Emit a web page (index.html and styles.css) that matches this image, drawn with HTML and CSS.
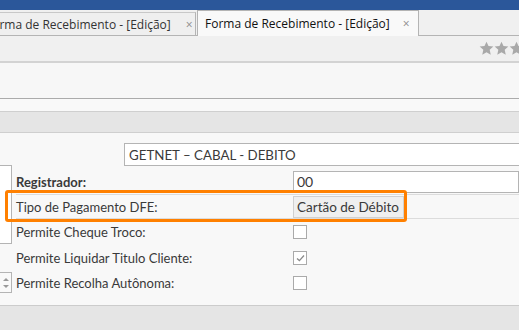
FILE: index.html
```html
<!DOCTYPE html>
<html lang="pt">
<head>
<meta charset="utf-8">
<title>Forma de Recebimento</title>
<link rel="stylesheet" href="styles.css">
</head>
<body>
<div class="app">
  <div class="titlebar"></div>
  <div class="tabstrip">
    <div class="tab tab-inactive"><span class="tab-label">Forma de Recebimento - [Edição]</span><span class="tab-close">×</span></div>
    <div class="tab tab-active"><span class="tab-label">Forma de Recebimento - [Edição]</span><span class="tab-close">×</span></div>
  </div>
  <div class="toolbar">
    <div class="toolbar-sep"></div>
    <div class="stars">
      <svg class="star" width="15" height="15" viewBox="0 0 24 24"><path d="M12 1 L15.2 8 L23 8.8 L17.1 14 L18.8 22 L12 18 L5.2 22 L6.9 14 L1 8.8 L8.8 8 Z" fill="#a9a9a9"/></svg>
      <svg class="star" width="15" height="15" viewBox="0 0 24 24"><path d="M12 1 L15.2 8 L23 8.8 L17.1 14 L18.8 22 L12 18 L5.2 22 L6.9 14 L1 8.8 L8.8 8 Z" fill="#a9a9a9"/></svg>
      <svg class="star" width="15" height="15" viewBox="0 0 24 24"><path d="M12 1 L15.2 8 L23 8.8 L17.1 14 L18.8 22 L12 18 L5.2 22 L6.9 14 L1 8.8 L8.8 8 Z" fill="#a9a9a9"/></svg>
    </div>
  </div>
  <div class="divider"></div>
  <div class="header"></div>
  <div class="subheader"></div>
  <div class="band"></div>
  <div class="form">
    <div class="gutter">
      <div class="side-box"></div>
      <div class="spinner"><span class="spin-up"></span><span class="spin-down"></span></div>
    </div>
    <div class="fields">
      <div class="row row-desc">
        <div class="input input-desc">GETNET – CABAL - DEBITO</div>
      </div>
      <div class="row row-reg">
        <div class="label label-bold">Registrador:</div>
        <div class="value"><div class="input input-reg">00</div></div>
      </div>
      <div class="row row-lined">
        <div class="label">Tipo de Pagamento DFE:</div>
        <div class="value"><div class="select">Cartão de Débito</div></div>
      </div>
      <div class="row">
        <div class="label">Permite Cheque Troco:</div>
        <div class="value"><span class="check"></span></div>
      </div>
      <div class="row row-short">
        <div class="label">Permite Liquidar Titulo Cliente:</div>
        <div class="value"><span class="check"><svg width="9" height="8" viewBox="0 0 9 8"><path d="M1 4.5 L3.4 6.6 L8 1.5" fill="none" stroke="#8a8a8a" stroke-width="1.3"/></svg></span></div>
      </div>
      <div class="row">
        <div class="label">Permite Recolha Autônoma:</div>
        <div class="value"><span class="check"></span></div>
      </div>
    </div>
    <div class="highlight"></div>
  </div>
  <div class="footer"></div>
</div>
</body>
</html>
```
FILE: styles.css
```css
* { box-sizing: border-box; }
html, body { margin: 0; padding: 0; }
body {
  width: 519px;
  height: 330px;
  overflow: hidden;
  font-family: Lato, "Open Sans", sans-serif;
  color: #3a3a3a;
  background: #f8f8f8;
}
.app { width: 519px; height: 330px; overflow: hidden; display: flex; flex-direction: column; }
.titlebar { height: 10px; background: #2b579a; flex: none; }
.tabstrip {
  height: 26px;
  flex: none;
  display: flex;
  align-items: flex-end;
  background: #f0f0f0;
  border-bottom: 1px solid #b4b4b4;
}
.tab {
  flex: none;
  display: flex;
  align-items: center;
  font-family: "Open Sans", sans-serif;
  font-size: 12px;
  white-space: nowrap;
  overflow: hidden;
}
.tab-inactive {
  height: 23px;
  margin-left: -21px;
  width: 217px;
  padding-left: 7px;
  background: #efefef;
  border-top: 1px solid #c8c8c8;
  border-right: 1px solid #b4b4b4;
  color: #333;
}
.tab-active {
  height: 26px;
  margin-bottom: -1px;
  margin-left: 1px;
  width: 222px;
  padding-left: 7px;
  background: #f9f9f9;
  border: 1px solid #b4b4b4;
  border-bottom: none;
  color: #111;
}
.tab-inactive .tab-close { margin-left: 15px; }
.tab-active .tab-close { margin-left: 13px; }
.tab-close { font-size: 12px; color: #8a8a8a; }
.toolbar {
  height: 25px;
  flex: none;
  background: #f0f0f0;
  display: flex;
  align-items: center;
  padding-left: 468px;
}
.toolbar-sep { width: 1px; height: 21px; background: #cfcfcf; }
.stars { margin-left: 11px; display: flex; gap: 0; flex: none; }
.star { flex: none; display: block; }
.divider { height: 2px; background: #d3d3d3; flex: none; }
.header { height: 36px; background: #f7f7f7; border-bottom: 1px solid #ababab; flex: none; }
.subheader { height: 13px; background: #f9f9f9; border-bottom: 1px solid #cfcfcf; flex: none; }
.band { height: 21px; background: #e5e5e5; border-bottom: 1px solid #cfcfcf; flex: none; }
.form {
  flex: none;
  height: 173px;
  display: flex;
  background: #f8f8f8;
  border-bottom: 1px solid #cccccc;
  position: relative;
}
.gutter { width: 16px; flex: none; display: flex; flex-direction: column; }
.side-box {
  margin-top: 32px;
  height: 79px;
  width: 12px;
  border: 1px solid #b4b4b4;
  border-left: none;
  background: #ffffff;
}
.spinner {
  margin-top: 28px;
  height: 21px;
  width: 12px;
  border: 1px solid #b4b4b4;
  border-left: none;
  background: #f9f9f9;
  display: flex;
  flex-direction: column;
  align-items: center;
  justify-content: center;
  gap: 4px;
}
.spin-up { width: 0; height: 0; border-left: 3px solid transparent; border-right: 3px solid transparent; border-bottom: 3px solid #999; }
.spin-down { width: 0; height: 0; border-left: 3px solid transparent; border-right: 3px solid transparent; border-top: 3px solid #999; }
.fields { flex: 1; display: flex; flex-direction: column; }
.row { display: flex; align-items: center; height: 26px; font-size: 13px; }
.row-short { height: 25px; }
.row-desc { height: 35px; padding-left: 108px; padding-top: 10px; align-items: flex-start; }
.row-reg { padding-top: 1px; }
.row-lined { border-top: 1px solid #dcdcdc; border-bottom: 1px solid #dcdcdc; height: 25px; }
.label { width: 277px; flex: none; white-space: nowrap; }
.label-bold { font-weight: bold; }
.value { flex: 1; display: flex; align-items: center; }
.input {
  background: #fff;
  border: 1px solid #b4b4b4;
  white-space: nowrap;
  display: flex;
  align-items: center;
}
.input-desc { height: 23px; flex: 1; margin-right: -20px; padding-left: 4px; font-size: 13.3px; }
.input-reg { height: 22px; width: 100%; margin-right: -20px; padding-left: 3px; font-size: 14px; }
.select {
  height: 22px;
  width: 111px;
  background: #efefef;
  border: 1px solid #d0d0d0;
  display: flex;
  align-items: center;
  padding-left: 3px;
  font-size: 13.5px;
  white-space: nowrap;
}
.check {
  width: 14px;
  height: 14px;
  border: 1px solid #aaaaaa;
  background: #fff;
  display: flex;
  align-items: center;
  justify-content: center;
}
.highlight {
  position: absolute;
  left: 5px;
  top: 57px;
  width: 402px;
  height: 32px;
  border: 3px solid #ff8000;
  border-radius: 3px;
  pointer-events: none;
}
.footer { flex: 1; background: #e5e5e5; }
```
